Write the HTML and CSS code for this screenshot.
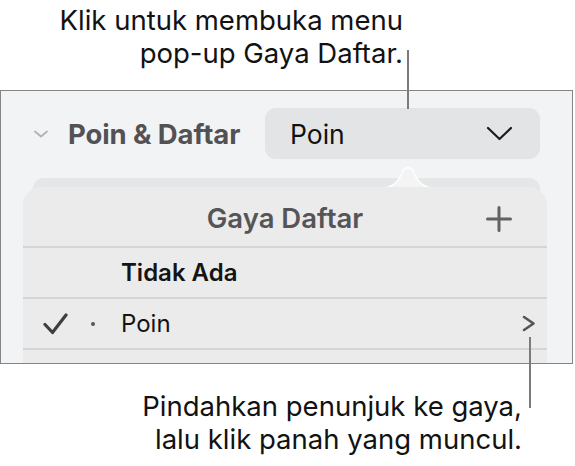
FILE: index.html
```html
<!DOCTYPE html>
<html lang="id">
<head>
<meta charset="utf-8">
<title>Poin &amp; Daftar</title>
<link rel="stylesheet" href="styles.css">
</head>
<body>
<div class="page">
  <p class="note note-top">Klik untuk membuka menu<br>pop-up Gaya Daftar.</p>

  <div class="panel">
    <div class="section-head">
      <svg class="disclosure" width="16" height="8" viewBox="0 0 16 8"><path d="M2 1.5 L8 6.5 L14 1.5" fill="none" stroke="#b3b3b5" stroke-width="1.8" stroke-linecap="round" stroke-linejoin="round"/></svg>
      <span class="section-title">Poin &amp; Daftar</span>
      <div class="popup">
        <span class="popup-label">Poin</span>
        <svg class="popup-chevron" width="27" height="15" viewBox="0 0 27 15"><path d="M2 2 L13.5 13 L25 2" fill="none" stroke="#1c1c1e" stroke-width="2.2" stroke-linecap="round" stroke-linejoin="round"/></svg>
      </div>
    </div>

    <div class="backbox"></div>

    <svg class="pop-arrow" width="56" height="24" viewBox="0 0 56 24"><path d="M0 23 C14 23 18 17 23 6 C25 1.5 31 1.5 33 6 C38 17 42 23 56 23" fill="#f4f4f5" stroke="#ffffff" stroke-width="1.5"/></svg>

    <div class="popover">
      <div class="pop-head">
        <span class="pop-title">Gaya Daftar</span>
        <svg class="plus" width="26" height="26" viewBox="0 0 26 26"><path d="M13 1.5 V24.5 M1.5 13 H24.5" stroke="#626264" stroke-width="3" stroke-linecap="round"/></svg>
      </div>
      <div class="row">
        <span class="row-check"></span>
        <span class="row-bullet"></span>
        <span class="row-label strong">Tidak Ada</span>
      </div>
      <div class="row">
        <span class="row-check"><svg width="25" height="22" viewBox="0 0 25 22"><path d="M2 11.5 L9.5 19.5 L23 2" fill="none" stroke="#3f3f41" stroke-width="3.2" stroke-linecap="round" stroke-linejoin="round"/></svg></span>
        <span class="row-bullet"><span class="dot"></span></span>
        <span class="row-label">Poin</span>
        <svg class="row-more" width="16" height="17" viewBox="0 0 16 17"><path d="M3 2 L12.5 8.5 L3 15" fill="none" stroke="#555557" stroke-width="2.6" stroke-linecap="round" stroke-linejoin="round"/></svg>
      </div>
      <div class="row"></div>
    </div>
  </div>

  <p class="note note-bottom">Pindahkan penunjuk ke gaya,<br>lalu klik panah yang muncul.</p>

  <span class="callout callout-top"></span>
  <span class="callout callout-bottom"></span>
</div>
</body>
</html>
```

FILE: styles.css
```css
html, body {
  margin: 0;
  padding: 0;
  background: #ffffff;
}

.page {
  position: relative;
  width: 575px;
  height: 466px;
  overflow: hidden;
  font-family: Inter, "Liberation Sans", sans-serif;
  color: #111111;
}

.note {
  margin: 0;
  font-size: 27.5px;
  line-height: 33px;
  text-align: right;
  color: #121212;
}

.note-top {
  padding: 4px 172px 0 0;
  height: 86px;
}

.note-bottom {
  padding: 26px 53px 0 0;
}

.panel {
  position: relative;
  box-sizing: border-box;
  width: 573px;
  height: 274px;
  border: 1px solid #858585;
  background: #f2f3f5;
  padding-top: 17px;
  overflow: hidden;
}

.section-head {
  display: flex;
  align-items: center;
  height: 51px;
}

.disclosure {
  margin-left: 32px;
  flex: none;
}

.section-title {
  margin-left: 19px;
  font-size: 27.5px;
  font-weight: 700;
  color: #525254;
  letter-spacing: -0.1px;
}

.popup {
  margin-left: auto;
  margin-right: 32px;
  width: 275px;
  height: 51px;
  box-sizing: border-box;
  border-radius: 11px;
  background: #e3e4e6;
  display: flex;
  align-items: center;
  padding: 0 27px 0 25px;
}

.popup-label {
  font-size: 26.5px;
  color: #111111;
  flex: 1;
}

.popup-chevron {
  flex: none;
}

.backbox {
  margin: 19px 32px 0 32px;
  height: 200px;
  border-radius: 11px;
  background: #e5e6e8;
}

.pop-arrow {
  position: absolute;
  left: 379px;
  top: 74px;
}

.popover {
  position: absolute;
  left: 22px;
  top: 96px;
  width: 524px;
  height: 200px;
  background: #ebebeb;
  border-radius: 18px 18px 0 0;
}

.pop-head {
  position: relative;
  height: 61px;
  display: flex;
  align-items: center;
  justify-content: center;
  border-bottom: 2px solid #d5d5d6;
  box-sizing: border-box;
}

.pop-title {
  font-size: 27.5px;
  font-weight: 600;
  color: #555557;
  padding-top: 2px;
}

.plus {
  position: absolute;
  right: 35px;
  top: 19px;
}

.row {
  display: flex;
  align-items: center;
  height: 51px;
  box-sizing: border-box;
  border-bottom: 2px solid #d5d5d6;
}

.row-check {
  width: 48px;
  margin-left: 20px;
  display: flex;
  align-items: center;
}

.row-bullet {
  width: 30px;
  display: flex;
  align-items: center;
}

.dot {
  width: 4px;
  height: 4px;
  border-radius: 50%;
  background: #555557;
}

.row-label {
  font-size: 24px;
  color: #141414;
  flex: 1;
}

.row-label.strong {
  font-weight: 600;
}

.row-more {
  margin-right: 10px;
}

.callout {
  position: absolute;
  width: 2px;
  background: #7b7b7b;
}

.callout-top {
  left: 407px;
  top: 50px;
  height: 59px;
}

.callout-bottom {
  left: 529px;
  top: 337px;
  height: 71px;
}
```
